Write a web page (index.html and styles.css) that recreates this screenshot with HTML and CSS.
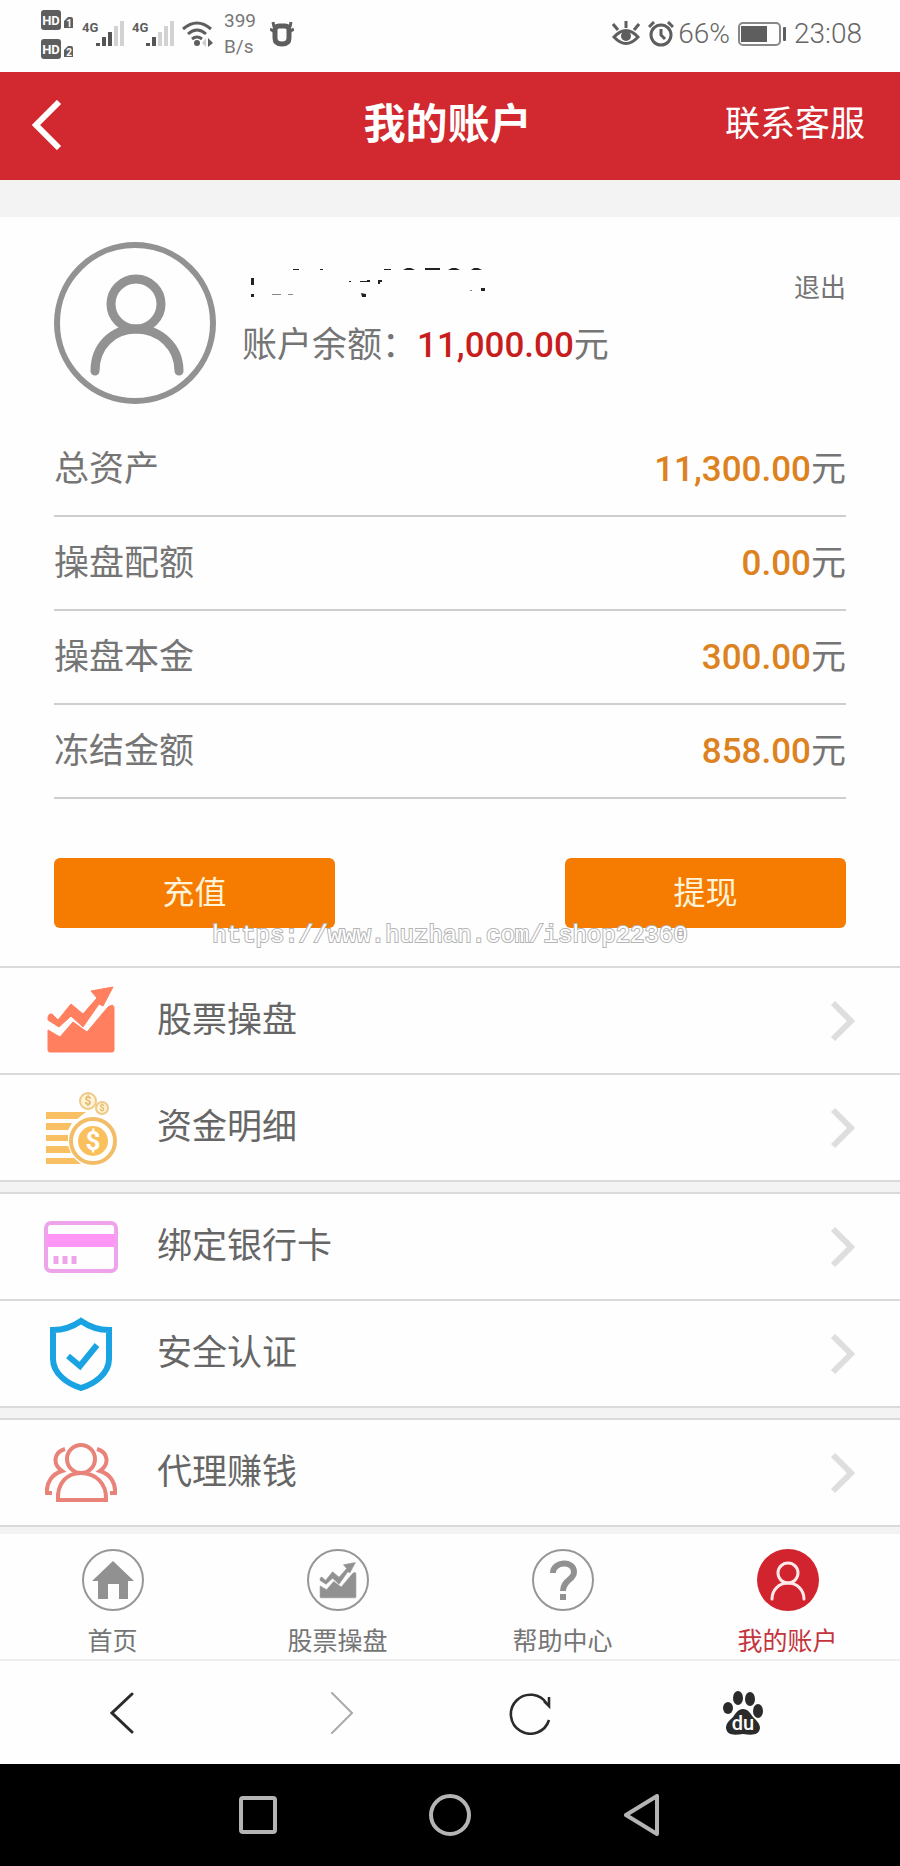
FILE: index.html
```html
<!DOCTYPE html>
<html lang="zh-CN">
<head>
<meta charset="utf-8">
<meta name="viewport" content="width=device-width, initial-scale=1">
<title>我的账户</title>
<link rel="stylesheet" href="styles.css">
</head>
<body>
<svg class="defs" aria-hidden="true">
  <symbol id="person" viewBox="0 0 62 62">
    <g fill="none" stroke="currentColor" stroke-linecap="round">
      <circle cx="31" cy="24" r="10"/>
      <path d="M15 50C15 41 22 34 31 34S47 41 47 50"/>
    </g>
  </symbol>
  <symbol id="chart" viewBox="0 0 70 70">
    <path d="M2 31Q3 27 6 28L12 34 25 18 37 28 51 12 45 5 67 1 57 20 53 18 37 41 25 30 13 41 2 34Z" stroke="currentColor" stroke-width="1" stroke-linejoin="round"/>
    <path d="M2 44 14 51 27 36 41 46 62 21Q68 17 68 22V64Q68 66 66 66H4Q2 66 2 64Z" stroke="currentColor" stroke-width="1" stroke-linejoin="round"/>
  </symbol>
  <symbol id="chevron" viewBox="0 0 25 42">
    <path d="M3 3 21 21 3 39" fill="none" stroke="currentColor" stroke-width="6"/>
  </symbol>
</svg>

<div class="status">
  <div class="status-side">
    <svg width="34" height="50" viewBox="0 0 34 50" role="img" aria-label="HD 1 HD 2">
      <g fill="#5e5e5e">
        <rect x="1" y="1" width="20" height="20" rx="3"/><rect x="1" y="30" width="20" height="20" rx="3"/>
        <path d="M24 12 28 8H31Q33 8 33 10V19H24ZM24 41 28 37H31Q33 37 33 39V48H24Z"/>
      </g>
      <g class="badge-text"><text x="11" y="16" font-size="13">HD</text><text x="11" y="45" font-size="13">HD</text><text x="29" y="18" font-size="10">1</text><text x="29" y="47" font-size="10">2</text></g>
    </svg>
    <svg width="42" height="34" viewBox="0 0 42 34" role="img" aria-label="4G">
      <text class="net-text" x="0" y="15">4G</text>
      <path d="M16 26V29M22 20V29M28 15V29" stroke="#555" stroke-width="4"/>
      <path d="M34 9V29M40 4V29" stroke="#d2d2d2" stroke-width="4"/>
    </svg>
    <svg width="42" height="34" viewBox="0 0 42 34" role="img" aria-label="4G">
      <text class="net-text" x="0" y="15">4G</text>
      <path d="M16 26V29M22 20V29" stroke="#555" stroke-width="4"/>
      <path d="M28 15V29M34 9V29M40 4V29" stroke="#d2d2d2" stroke-width="4"/>
    </svg>
    <svg width="31" height="26" viewBox="0 0 31 26" aria-hidden="true">
      <path d="M1 8Q15-4 29 8M6 13Q15 5 24 13M10 18Q15 14 20 18" fill="none" stroke="#5e5e5e" stroke-width="3"/>
      <circle cx="15" cy="22" r="3" fill="#5e5e5e"/><path d="M26 17 31 22 26 26Z" fill="#5e5e5e"/><path d="M24 17 20 22 24 26Z" fill="#ccc"/>
    </svg>
    <div class="speed">399<br>B/s</div>
    <svg width="24" height="26" viewBox="0 0 24 26" aria-hidden="true">
      <path d="M9 5H15Q19 5 19 9V17Q19 23 12 23T5 17V9Q5 5 9 5Z" fill="none" stroke="#5e5e5e" stroke-width="5"/>
      <path d="M3 1 4 6M21 1 20 6M0 8 5 11M24 8 19 11" fill="none" stroke="#5e5e5e" stroke-width="3"/>
    </svg>
  </div>
  <div class="status-side status-right">
    <svg width="28" height="26" viewBox="0 0 28 26" aria-hidden="true">
      <path d="M2 16Q14 3 26 16Q14 29 2 16ZM14 7V0M6 9 1 3M22 9 27 3" fill="none" stroke="#5e5e5e" stroke-width="3"/><circle cx="14" cy="15" r="5" fill="#5e5e5e"/>
    </svg>
    <svg class="alarm" width="26" height="26" viewBox="0 0 26 26" aria-hidden="true">
      <path d="M1 6 6 1M25 6 20 1M13 8V14L17 18" fill="none" stroke="#5e5e5e" stroke-width="3"/><circle cx="13" cy="14" r="10" fill="none" stroke="#5e5e5e" stroke-width="3"/>
    </svg>
    <span>66%</span>
    <svg width="48" height="24" viewBox="0 0 48 24" aria-hidden="true">
      <rect x="1" y="1" width="41" height="22" rx="4" fill="none" stroke="#888" stroke-width="2"/><rect x="3" y="4" width="26" height="16" fill="#5e5e5e"/><rect x="45" y="5" width="3" height="14" rx="1" fill="#5e5e5e"/>
    </svg>
    <span>23:08</span>
  </div>
</div>

<header class="header">
  <button class="back" type="button" aria-label="返回">
    <svg width="32" height="50" viewBox="0 0 32 50"><path d="M29 2 6 25 29 48" fill="none" stroke="#fff" stroke-width="6"/></svg>
  </button>
  <h1>我的账户</h1>
  <a class="contact" href="#">联系客服</a>
</header>

<main>
  <section class="profile">
    <div class="user">
      <svg class="avatar" viewBox="0 0 162 162" aria-hidden="true">
        <circle cx="81" cy="81" r="78"/>
        <g class="avatar-figure"><circle cx="82" cy="62" r="25"/><path d="M41 129C41 105 58 87 82 87S125 105 125 129"/></g>
      </svg>
      <div class="info">
        <div class="name-row">
          <svg width="250" height="30" viewBox="0 0 250 30" aria-hidden="true">
            <path fill="#222" d="M9 10h3v7H9zM9 26h3v3H9zM51 1h6v1h-6zM78 1h3v1h-3zM142 1h7v1h-7zM161 2 165 0h4l4 2zM183 0h15v2H183zM206 2 210 0h4l4 2zM229 2 232 0h4l4 2zM118 13h7v-1h3v2H118zM136 12h4v2h-2v2h-2zM119 25 124 26v3h-4zM239 20h4v3h-4zM107 13h2v1h-2z"/>
            <path fill="#888" d="M30 26h9v1h-9zM46 26h5v1h-5zM228 22h2v1h-2z"/>
          </svg>
          <a class="logout" href="#">退出</a>
        </div>
        <div class="balance">账户余额：<strong>11,000.00</strong>元</div>
      </div>
    </div>
    <dl class="assets">
      <div><dt>总资产</dt><dd><strong>11,300.00</strong>元</dd></div>
      <div><dt>操盘配额</dt><dd><strong>0.00</strong>元</dd></div>
      <div><dt>操盘本金</dt><dd><strong>300.00</strong>元</dd></div>
      <div><dt>冻结金额</dt><dd><strong>858.00</strong>元</dd></div>
    </dl>
    <div class="actions">
      <button type="button">充值</button>
      <button type="button">提现</button>
      <span class="watermark">https://www.huzhan.com/ishop22360</span>
    </div>
  </section>

  <nav class="menu" aria-label="账户功能">
    <div class="group">
      <a href="#">
        <svg width="70" height="70" viewBox="0 0 70 70" fill="#ff7f5f" color="#ff7f5f"><use href="#chart"/></svg>
        <span>股票操盘</span><svg class="arrow" width="25" height="42"><use href="#chevron"/></svg>
      </a>
      <a href="#">
        <svg width="72" height="74" viewBox="0 0 72 74">
          <path d="M1 21H41L32 28H1ZM1 32H27L23 39H1ZM1 44H23V50H1ZM1 55H23L26 62H1ZM1 67H29L36 73H1Z" fill="#f8c063"/>
          <circle cx="48" cy="50" r="22" fill="#fff" stroke="#f3bd68" stroke-width="4"/><circle cx="48" cy="50" r="15" fill="#fac05c"/>
          <circle cx="43" cy="10" r="8" fill="#fff3d6" stroke="#efc987" stroke-width="2"/><circle cx="57" cy="17" r="6" fill="#fff3d6" stroke="#efc987" stroke-width="2"/>
          <g class="coin-text"><text x="48" y="59" font-size="26" fill="#fff">$</text><text x="43" y="14" font-size="12" fill="#e5b868">$</text><text x="57" y="20" font-size="9" fill="#e5b868">$</text></g>
        </svg>
        <span>资金明细</span><svg class="arrow" width="25" height="42"><use href="#chevron"/></svg>
      </a>
    </div>
    <div class="group">
      <a href="#">
        <svg width="74" height="52" viewBox="0 0 74 52">
          <rect x="2" y="2" width="70" height="48" rx="5" fill="none" stroke="#eda4ea" stroke-width="4"/><path d="M3 13H71V26H3Z" fill="#ff96f6"/><path d="M12 35V43M21 35V43M30 35V43" stroke="#eda4ea" stroke-width="5"/>
        </svg>
        <span>绑定银行卡</span><svg class="arrow" width="25" height="42"><use href="#chevron"/></svg>
      </a>
      <a href="#">
        <svg width="62" height="74" viewBox="0 0 62 74">
          <path d="M31 4Q18 13 3 13V42C3 57 18 67 31 71C44 67 59 57 59 42V13Q44 13 31 4Z" fill="none" stroke="#1aa3e2" stroke-width="6"/><path d="M18 39 30 49 47 28" fill="none" stroke="#1aa3e2" stroke-width="6"/>
        </svg>
        <span>安全认证</span><svg class="arrow" width="25" height="42"><use href="#chevron"/></svg>
      </a>
    </div>
    <div class="group">
      <a href="#">
        <svg width="72" height="60" viewBox="0 0 72 60">
          <g fill="none" stroke="#e9837a" stroke-width="4">
            <circle cx="36" cy="16" r="14"/><path d="M13 57C12 40 22 30 36 30S62 40 61 57Z"/>
            <path d="M20 6C9 9 7 21 17 28C7 31 1 40 2 50H7M52 6C63 9 65 21 55 28C65 31 71 40 70 50H65"/>
          </g>
        </svg>
        <span>代理赚钱</span><svg class="arrow" width="25" height="42"><use href="#chevron"/></svg>
      </a>
    </div>
  </nav>
</main>

<nav class="tabs" aria-label="主导航">
  <a href="#">
    <svg width="62" height="62" viewBox="0 0 62 62"><circle class="ring" cx="31" cy="31" r="30"/><path d="M31 12 52 32H46V50H37V35H26V50H16V32H10Z" fill="#919191"/></svg>
    首页</a>
  <a href="#">
    <svg width="62" height="62" viewBox="0 0 62 62" fill="#919191" color="#919191"><circle class="ring" cx="31" cy="31" r="30"/><use href="#chart" x="12" y="13" width="38" height="38"/></svg>
    股票操盘</a>
  <a href="#">
    <svg width="62" height="62" viewBox="0 0 62 62"><circle class="ring" cx="31" cy="31" r="30"/><path d="M21 24C21 12 42 11 42 23C42 31 31 31 31 42" fill="none" stroke="#919191" stroke-width="6"/><path d="M28 45H34V51H28Z" fill="#919191"/></svg>
    帮助中心</a>
  <a class="current" href="#" aria-current="page">
    <svg width="62" height="62" viewBox="0 0 62 62" color="#ffe9e9" stroke-width="3"><circle cx="31" cy="31" r="31" fill="#d1242f" stroke="none"/><use href="#person"/></svg>
    我的账户</a>
</nav>

<div class="browser">
  <button type="button" aria-label="后退"><svg width="24" height="42" viewBox="0 0 24 42"><path d="M22 2 2 21 22 40" fill="none" stroke="#2b2b2b" stroke-width="3" stroke-linecap="round"/></svg></button>
  <button type="button" aria-label="前进"><svg width="24" height="42" viewBox="0 0 24 42"><path d="M2 1 22 21 2 41" fill="none" stroke="#aaa" stroke-width="2" stroke-linecap="round"/></svg></button>
  <button type="button" aria-label="刷新"><svg width="42" height="44" viewBox="0 0 42 44"><path d="M40 29A19.5 19.5 0 1 1 38 13M40 6V15L35 10" fill="none" stroke="#2b2b2b" stroke-width="2.6"/></svg></button>
  <button type="button" aria-label="百度"><svg width="42" height="44" viewBox="0 0 42 44">
    <g fill="#2b2b2b"><ellipse cx="6" cy="17" rx="5" ry="6"/><ellipse cx="16" cy="7" rx="5" ry="7"/><ellipse cx="28" cy="8" rx="5" ry="7"/><ellipse cx="36" cy="20" rx="5" ry="7"/><path d="M21 18C26 18 28 22 31 26C35 30 38 33 38 37C37 45 29 44 21 43C13 44 5 45 4 37C4 32 8 29 11 26C14 22 16 18 21 18Z"/></g>
    <text class="paw-text" x="21" y="39">du</text></svg></button>
</div>

<div class="system">
  <button type="button" aria-label="最近任务"><svg width="38" height="38" viewBox="0 0 38 38"><rect x="2" y="2" width="34" height="34" rx="2"/></svg></button>
  <button type="button" aria-label="主屏幕"><svg width="42" height="42" viewBox="0 0 42 42"><circle cx="21" cy="21" r="19"/></svg></button>
  <button type="button" aria-label="返回"><svg width="36" height="42" viewBox="0 0 36 42"><path d="M33 2V40L2 21Z"/></svg></button>
</div>
</body>
</html>
```
FILE: styles.css
```css
* { box-sizing: border-box; }
body {
  margin: 0;
  background: #f3f3f3;
  color: #757575;
  font-family: Roboto, "Noto Sans CJK SC", sans-serif;
  font-size: 35px;
  line-height: 50px;
}
a { color: inherit; text-decoration: none; }
button {
  padding: 0;
  border: 0;
  background: none;
  color: inherit;
  font: inherit;
}
svg { display: block; flex: none; }
.defs { position: absolute; width: 0; height: 0; }

.status {
  display: flex;
  justify-content: space-between;
  height: 72px;
  padding: 0 38px 4px 40px;
  background: #fefefe;
  color: #666;
  font-size: 28px;
  font-weight: 300;
}
.status-side { display: flex; align-items: center; gap: 8px; }
.alarm { margin-right: -4px; }
.speed { margin: 0 6px 0 3px; font-size: 19px; line-height: 26px; font-weight: 400; color: #777; }
.badge-text { fill: #fff; font-weight: 700; text-anchor: middle; }
.net-text { fill: #5e5e5e; font-size: 13px; font-weight: 700; }

.header {
  display: grid;
  grid-template-columns: 1fr auto 1fr;
  align-items: center;
  height: 108px;
  padding: 0 35px 2px 30px;
  background: #d1292f;
  color: #fff;
}
.header h1 { margin: 0; font-size: 42px; font-weight: 700; }
.contact { justify-self: end; }

.profile {
  margin-top: 37px;
  padding: 25px 54px 38px;
  background: #fefefe;
}
.user { display: flex; gap: 26px; }
.avatar { width: 162px; height: 162px; fill: none; stroke: #929292; stroke-width: 6; }
.avatar-figure { stroke-width: 9; stroke-linecap: round; }
.info { flex: 1; padding-top: 26px; }
.name-row { display: flex; justify-content: space-between; height: 53px; }
.logout { font-size: 26px; line-height: 40px; }
.balance strong { color: #c71d1d; font-weight: 500; }

.assets { margin: 19px 0 0; }
.assets div {
  display: flex;
  justify-content: space-between;
  align-items: center;
  height: 94px;
  padding-top: 2px;
  border-bottom: 2px solid #cecece;
}
.assets dd { margin: 0; }
.assets strong { color: #dc821f; font-weight: 500; }

.actions {
  position: relative;
  display: flex;
  justify-content: space-between;
  margin-top: 59px;
}
.actions button {
  flex: 0 1 281px;
  height: 70px;
  border-radius: 6px;
  background: #f57c00;
  color: #fff3d9;
  font-size: 32px;
}
.watermark {
  position: absolute;
  top: 64px;
  left: 0;
  right: 0;
  color: #fff;
  font-family: "Liberation Mono", monospace;
  font-size: 24px;
  line-height: 28px;
  text-align: center;
  -webkit-text-stroke: 2px #b4b4b4;
  paint-order: stroke fill;
  pointer-events: none;
}

.menu { display: grid; gap: 10px; color: #666; }
.group { border-top: 2px solid #dadada; background: #fefefe; }
.group a {
  display: grid;
  grid-template-columns: 80px 1fr auto;
  align-items: center;
  column-gap: 36px;
  height: 107px;
  padding: 0 45px 0 41px;
  border-bottom: 2px solid #dadada;
}
.group a > svg:first-child { justify-self: center; }
.arrow { color: #dedede; }
.coin-text { font-weight: 700; text-anchor: middle; }

.tabs {
  display: grid;
  grid-template-columns: repeat(4, 1fr);
  margin-top: 7px;
  padding: 15px 0 2px;
  background: #fefefe;
  font-size: 25px;
  line-height: 30px;
}
.tabs a { display: flex; flex-direction: column; align-items: center; gap: 16px; }
.tabs .current { color: #c4343d; }
.ring { fill: none; stroke: #969696; stroke-width: 2; }

.browser {
  display: grid;
  grid-template-columns: 244fr 196fr 180fr 246fr 34fr;
  height: 105px;
  border-top: 2px solid #eee;
  background: #fefefe;
}
.browser button, .system button { display: grid; place-items: center; }
.paw-text { fill: #fff; font-size: 20px; font-weight: 500; text-anchor: middle; }

.system {
  display: grid;
  grid-template-columns: repeat(3, 1fr);
  height: 102px;
  padding: 0 18%;
  background: #000;
}
.system svg { fill: none; stroke: #b4b4b4; stroke-width: 4; stroke-linejoin: round; }
```
